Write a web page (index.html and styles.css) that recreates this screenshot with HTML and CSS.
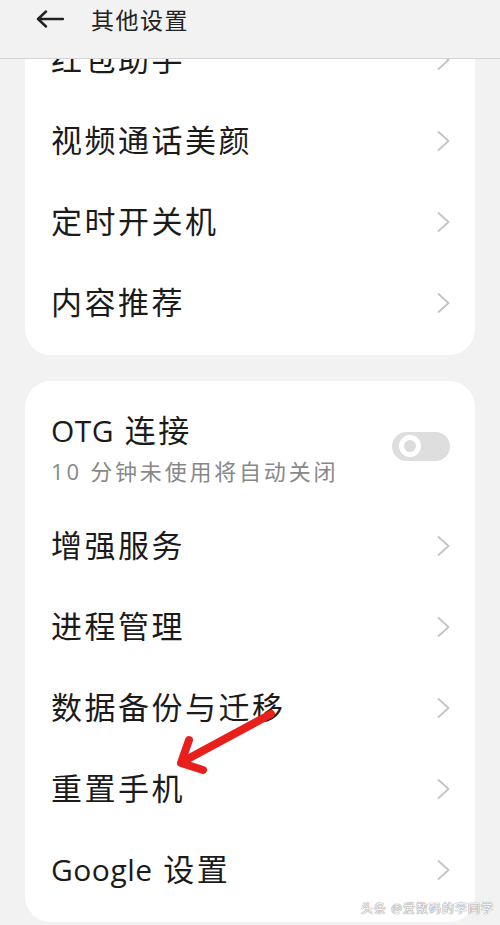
FILE: index.html
```html
<!DOCTYPE html>
<html>
<head>
  <title>其他设置</title>
  <link rel="stylesheet" href="styles.css">
</head>
<body>
  <div class="topbar">
    <svg class="back-icon" width="28" height="18" viewBox="0 0 28 18">
      <path d="M2 9 H27 M10 1.5 L2 9 L10 16.5" fill="none" stroke="#222" stroke-width="2.4" stroke-linecap="round" stroke-linejoin="round"/>
    </svg>
    <h1>其他设置</h1>
  </div>

  <div class="content">
    <div class="card">
      <div class="row"><span class="label">红包助手</span><svg class="chevron" width="13" height="20" viewBox="0 0 13 20"><polyline points="1.5,1 11.5,10 1.5,19"/></svg></div>
      <div class="row"><span class="label">视频通话美颜</span><svg class="chevron" width="13" height="20" viewBox="0 0 13 20"><polyline points="1.5,1 11.5,10 1.5,19"/></svg></div>
      <div class="row"><span class="label">定时开关机</span><svg class="chevron" width="13" height="20" viewBox="0 0 13 20"><polyline points="1.5,1 11.5,10 1.5,19"/></svg></div>
      <div class="row"><span class="label">内容推荐</span><svg class="chevron" width="13" height="20" viewBox="0 0 13 20"><polyline points="1.5,1 11.5,10 1.5,19"/></svg></div>
    </div>

    <div class="card">
      <div class="row row-tall">
        <div>
          <div class="label"><span class="latin">OTG</span> 连接</div>
          <div class="sub">10 分钟未使用将自动关闭</div>
        </div>
        <div class="toggle"><div class="knob"></div></div>
      </div>
      <div class="row"><span class="label">增强服务</span><svg class="chevron" width="13" height="20" viewBox="0 0 13 20"><polyline points="1.5,1 11.5,10 1.5,19"/></svg></div>
      <div class="row"><span class="label">进程管理</span><svg class="chevron" width="13" height="20" viewBox="0 0 13 20"><polyline points="1.5,1 11.5,10 1.5,19"/></svg></div>
      <div class="row"><span class="label">数据备份与迁移</span><svg class="chevron" width="13" height="20" viewBox="0 0 13 20"><polyline points="1.5,1 11.5,10 1.5,19"/></svg></div>
      <div class="row"><span class="label">重置手机</span><svg class="chevron" width="13" height="20" viewBox="0 0 13 20"><polyline points="1.5,1 11.5,10 1.5,19"/></svg></div>
      <div class="row"><span class="label"><span class="latin">Google</span> 设置</span><svg class="chevron" width="13" height="20" viewBox="0 0 13 20"><polyline points="1.5,1 11.5,10 1.5,19"/></svg></div>
    </div>
  </div>

  <!-- red annotation arrow drawn over the list -->
  <svg class="annotation" width="500" height="925" viewBox="0 0 500 925">
    <g fill="none" stroke="#e8201c" stroke-width="8" stroke-linecap="round" stroke-linejoin="round">
      <path d="M271 714 L182 762"/>
      <path d="M189 740 L181 763 L203 770"/>
    </g>
  </svg>

  <div class="watermark">头条 @爱数码的李同学</div>
</body>
</html>
```

FILE: styles.css
```css
html, body {
  margin: 0;
  padding: 0;
  height: 100%;
  overflow: hidden;
}
body {
  background-color: #f2f2f2;
  font-family: "Open Sans", "Noto Sans CJK SC", sans-serif;
  color: #1b1b1b;
}
.topbar {
  position: fixed;
  top: 0;
  left: 0;
  right: 0;
  height: 58px;
  display: flex;
  align-items: center;
  gap: 27px;
  padding: 0 0 0 36px;
  background-color: #f2f2f2;
  border-bottom: 1px solid #d4d4d4;
  z-index: 2;
}
.back-icon {
  margin-top: -20px;
}
.topbar h1 {
  margin: -20px 0 0;
  font-size: 23px;
  font-weight: 400;
  letter-spacing: 1.5px;
  color: #222;
}
.content {
  padding: 7px 25px 0;
}
.card {
  background-color: #fff;
  border-radius: 26px;
  padding: 12px 25px 12px 26px;
  margin-bottom: 26px;
}
.row {
  height: 81px;
  display: flex;
  align-items: center;
  justify-content: space-between;
}
.row-tall {
  height: 112px;
}
.label {
  font-size: 31px;
  letter-spacing: 2.5px;
  line-height: 1.2;
}
.latin {
  font-size: 30px;
  letter-spacing: 0.5px;
}
.sub {
  font-size: 22px;
  letter-spacing: 2.8px;
  color: #888;
  margin-top: 4px;
}
.chevron polyline {
  fill: none;
  stroke: #c4c4c4;
  stroke-width: 1.8;
  stroke-linecap: round;
  stroke-linejoin: round;
}
.toggle {
  width: 58px;
  height: 29px;
  border-radius: 15px;
  background-color: #dedede;
  display: flex;
  align-items: center;
  padding-left: 7px;
  box-sizing: border-box;
  margin-top: -6px;
}
.knob {
  width: 12px;
  height: 12px;
  border-radius: 50%;
  background-color: #dcdcdc;
  border: 5px solid #fff;
}
.annotation {
  position: absolute;
  top: 0;
  left: 0;
  pointer-events: none;
}
.watermark {
  position: absolute;
  right: 6px;
  top: 899px;
  font-size: 12px;
  letter-spacing: 1px;
  color: #fff;
  text-shadow: 0 0 1px #777, 0 0 1px #777;
}
```
